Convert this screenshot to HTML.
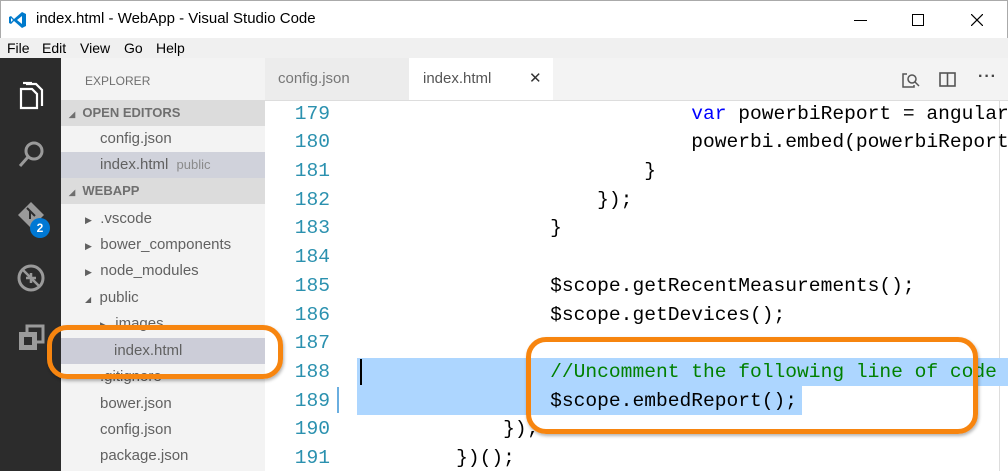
<!DOCTYPE html>
<html><head><style>
*{margin:0;padding:0;box-sizing:border-box}
body{width:1008px;height:471px;overflow:hidden;background:#fff;font-family:"Liberation Sans",sans-serif;position:relative}
.abs{position:absolute}
.title{left:0;top:0;width:1008px;height:38px;background:#fff;border:1px solid #aaa;border-bottom:none}
.menu{left:0;top:38px;width:1008px;height:20px;background:#f0f0f0;font-size:14px;color:#000}
.menu span{position:absolute;top:2px}
.act{left:0;top:58px;width:61px;height:413px;background:#2c2c2c}
.side{left:61px;top:58px;width:204px;height:413px;background:#f3f3f3;font-size:15px;color:#616161}
.row{position:absolute;left:0;width:204px;height:26px;line-height:26px}
.hdr{background:#dcdcdc;font-weight:bold;font-size:13px;color:#6f6f6f}
.tabs{left:265px;top:58px;width:743px;height:42px;background:#f3f3f3}
.code{font-family:"Liberation Mono",monospace;font-size:19.6px;position:absolute;left:0;top:3px;width:1008px;height:471px}
.ln{position:absolute;left:265px;width:65px;text-align:right;color:#2b91af}
.cl{position:absolute;left:362px;white-space:pre;color:#000}
</style></head><body>
<div class="abs title">
<svg class="abs" style="left:8px;top:10px" width="18" height="18" viewBox="0 0 18 18"><path d="M13 1 L17 3 V15 L13 17 L5 10 L2 13 L0 12 V6 L2 5 L5 8 Z M13 5 L8 9 L13 13 Z M2 7 V11 L4 9Z" fill="#007acc"/></svg>
<div class="abs" style="left:35px;top:9px;font-size:15px;color:#000">index.html - WebApp - Visual Studio Code</div>
<div class="abs" style="left:853px;top:19px;width:13px;height:1px;background:#000"></div>
<div class="abs" style="left:911px;top:13px;width:12px;height:12px;border:1px solid #000"></div>
<svg class="abs" style="left:970px;top:13px" width="12" height="12"><path d="M0 0L12 12M12 0L0 12" stroke="#000" stroke-width="1.2"/></svg>
</div>
<div class="abs menu"><span style="left:7px">File</span><span style="left:42px">Edit</span><span style="left:80px">View</span><span style="left:124px">Go</span><span style="left:156px">Help</span></div>
<div class="abs act">
<svg class="abs" style="left:18px;top:22px" width="26" height="30" viewBox="0 0 26 30" fill="none" stroke="#fff" stroke-width="2.2"><path d="M8 4h10l6 6v16"/><path d="M3 9h11l5 5v14H3z"/><path d="M5 3h9"/></svg>
<svg class="abs" style="left:17px;top:82px" width="28" height="30" fill="none" stroke="#9a9a9a" stroke-width="3"><circle cx="17" cy="11" r="8"/><path d="M11 17L3 26"/></svg>
<svg class="abs" style="left:16px;top:142px" width="30" height="32"><path d="M15 2L28 15L15 28L2 15Z" fill="#9a9a9a"/><path d="M11 8l8 8M14 11v8" stroke="#2c2c2c" stroke-width="2"/></svg>
<div class="abs" style="left:30px;top:160px;width:20px;height:20px;border-radius:10px;background:#0078d4;color:#fff;font-size:12px;font-weight:bold;text-align:center;line-height:20px">2</div>
<svg class="abs" style="left:16px;top:205px" width="30" height="30" fill="none" stroke="#9a9a9a" stroke-width="3"><circle cx="15" cy="15" r="12"/><path d="M7 7L23 23M10 15h10M15 10v10" stroke-width="2.5"/></svg>
<svg class="abs" style="left:17px;top:266px" width="28" height="28" fill="#9a9a9a"><path d="M2 8h18v18H2z"/><path d="M10 2h16v16H10z" fill="none" stroke="#9a9a9a" stroke-width="3"/><rect x="7" y="13" width="8" height="8" fill="#2c2c2c"/></svg>
</div>
<div class="abs side">
<div class="row" style="top:10px;left:24px;font-size:12px;color:#6f6f6f">EXPLORER</div>
<div class="row hdr" style="top:42px"><span style="font-size:8px;margin-left:8px">◢</span>&nbsp; OPEN EDITORS</div>
<div class="row" style="top:68px;padding-left:39px">config.json</div>
<div class="row" style="top:94px;padding-left:39px;background:#d0d2db">index.html <span style="font-size:13px;color:#8a8a8a;margin-left:4px">public</span></div>
<div class="row hdr" style="top:120px"><span style="font-size:8px;margin-left:8px">◢</span>&nbsp; WEBAPP</div>
<div class="row" style="top:148px;padding-left:24px"><span style="font-size:9px">▶</span>&nbsp; .vscode</div>
<div class="row" style="top:174px;padding-left:24px"><span style="font-size:9px">▶</span>&nbsp; bower_components</div>
<div class="row" style="top:200px;padding-left:24px"><span style="font-size:9px">▶</span>&nbsp; node_modules</div>
<div class="row" style="top:227px;padding-left:24px"><span style="font-size:8px">◢</span>&nbsp; public</div>
<div class="row" style="top:253px;padding-left:39px"><span style="font-size:9px">▶</span>&nbsp; images</div>
<div class="row" style="top:280px;padding-left:53px;background:#cccdd8">index.html</div>
<div class="row" style="top:306px;padding-left:39px">.gitignore</div>
<div class="row" style="top:333px;padding-left:39px">bower.json</div>
<div class="row" style="top:359px;padding-left:39px">config.json</div>
<div class="row" style="top:385px;padding-left:39px">package.json</div>
</div>
<div class="abs tabs">
<div class="abs" style="left:0;top:0;width:144px;height:42px;background:#ececec;color:#777;font-size:15px;line-height:42px;padding-left:13px">config.json</div>
<div class="abs" style="left:144px;top:0;width:144px;height:42px;background:#fff;color:#555;font-size:15px;line-height:42px;padding-left:14px">index.html<span style="position:absolute;left:120px;color:#333;font-size:15px">✕</span></div>
<svg class="abs" style="left:636px;top:13px" width="20" height="18" fill="none" stroke="#555" stroke-width="1.5"><path d="M6 3H2v13h11v-2"/><circle cx="11" cy="8" r="4"/><path d="M14 11l4 4"/></svg>
<svg class="abs" style="left:674px;top:14px" width="18" height="16" fill="none" stroke="#555" stroke-width="1.6"><rect x="1" y="1" width="15" height="13"/><path d="M8.5 1v13"/></svg>
<div class="abs" style="left:713px;top:10px;font-size:16px;color:#444;font-weight:bold;letter-spacing:1px">···</div>
</div>
<div class="abs" style="left:265px;top:100px;width:743px;height:1px;background:#ddd"></div>
<div class="abs" style="left:999px;top:100px;width:1px;height:371px;background:#ddd"></div>
<div class="abs" style="left:357px;top:358px;width:651px;height:28px;background:#add6ff"></div>
<div class="abs" style="left:357px;top:386px;width:445px;height:29px;background:#add6ff"></div>
<div class="abs" style="left:360px;top:359px;width:2px;height:26px;background:#000"></div>
<div class="abs" style="left:337px;top:387px;width:2px;height:26px;background:#6aaee0"></div>
<div class="code">
<div class="ln" style="top:100px">179</div><div class="cl" style="top:100px">                            <span style="color:#00f">var</span> powerbiReport = angular</div>
<div class="ln" style="top:128px">180</div><div class="cl" style="top:128px">                            powerbi.embed(powerbiReport</div>
<div class="ln" style="top:157px">181</div><div class="cl" style="top:157px">                        }</div>
<div class="ln" style="top:186px">182</div><div class="cl" style="top:186px">                    });</div>
<div class="ln" style="top:214px">183</div><div class="cl" style="top:214px">                }</div>
<div class="ln" style="top:243px">184</div>
<div class="ln" style="top:272px">185</div><div class="cl" style="top:272px">                $scope.getRecentMeasurements();</div>
<div class="ln" style="top:301px">186</div><div class="cl" style="top:301px">                $scope.getDevices();</div>
<div class="ln" style="top:329px">187</div>
<div class="ln" style="top:358px">188</div><div class="cl" style="top:358px;color:#008000">                //Uncomment the following line of code</div>
<div class="ln" style="top:387px">189</div><div class="cl" style="top:387px">                $scope.embedReport();</div>
<div class="ln" style="top:415px">190</div><div class="cl" style="top:415px">            });</div>
<div class="ln" style="top:444px">191</div><div class="cl" style="top:444px">        })();</div>
</div>
<div class="abs" style="left:47px;top:325px;width:236px;height:54px;border:5px solid #f7850f;border-radius:20px;box-shadow:1px 2px 3px rgba(0,0,0,.3)"></div>
<div class="abs" style="left:526px;top:337px;width:452px;height:97px;border:5px solid #f7850f;border-radius:20px;box-shadow:1px 2px 3px rgba(0,0,0,.3)"></div>
</body></html>
